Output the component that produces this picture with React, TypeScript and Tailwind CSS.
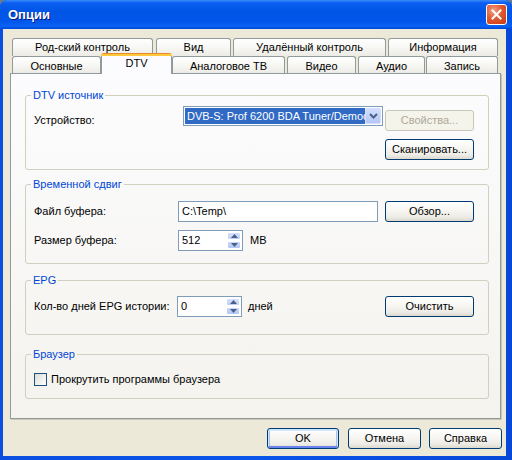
import React from "react";

type BtnProps = {
  className?: string;
  children: React.ReactNode;
  disabled?: boolean;
  def?: boolean;
};

function Btn({ className = "", children, disabled, def }: BtnProps) {
  const base =
    "h-[21px] shrink-0 flex items-center justify-center rounded-[3px] border leading-[13px]";
  const look = disabled
    ? "border-[#C9C7BA] text-[#ACA899] bg-[#F5F4EA]"
    : "border-[#003C74] text-black bg-[linear-gradient(to_bottom,#ffffff_0%,#f7f6f2_45%,#ecebe5_80%,#dcd8cc_100%)]";
  const ring = def
    ? "shadow-[inset_0_1px_0_1px_#cee7ff,inset_0_-1px_0_1px_#6982ee,inset_0_0_0_2px_#a8c1f4]"
    : "";
  return <div className={`${base} ${look} ${ring} ${className}`}>{children}</div>;
}

function Tab({ className = "", children }: { className?: string; children: React.ReactNode }) {
  return (
    <div
      className={`shrink-0 flex items-center justify-center border-t border-l border-r border-[#919B9C] rounded-t-[3px] bg-[linear-gradient(to_bottom,#ffffff_0%,#f7f7f4_50%,#ecebe5_100%)] leading-[13px] ${className}`}
    >
      {children}
    </div>
  );
}

function SpinArrows() {
  return (
    <div className="w-[15px] h-full flex flex-col gap-[1px] py-[1px] pr-[1px]">
      <div className="flex-1 flex items-center justify-center rounded-[2px] border border-white bg-[linear-gradient(to_bottom,#d6e2fd,#bcd0f8)]">
        <svg width="7" height="4" viewBox="0 0 7 4">
          <path d="M0 4 L3.5 0 L7 4 Z" fill="#4D6185" />
        </svg>
      </div>
      <div className="flex-1 flex items-center justify-center rounded-[2px] border border-white bg-[linear-gradient(to_bottom,#c9d8fb,#b2c6f4)]">
        <svg width="7" height="4" viewBox="0 0 7 4">
          <path d="M0 0 L3.5 4 L7 0 Z" fill="#4D6185" />
        </svg>
      </div>
    </div>
  );
}

function Spin({ value }: { value: string }) {
  return (
    <div className="w-[65px] h-[21px] shrink-0 flex items-stretch border border-[#7F9DB9] bg-white">
      <div className="flex-1 flex items-center pl-[3px] leading-[13px]">{value}</div>
      <SpinArrows />
    </div>
  );
}

function Legend({ children }: { children: React.ReactNode }) {
  return (
    <legend className="ml-[-3px] px-[2px] leading-[14px] text-[#0046D5]">{children}</legend>
  );
}

export default function App() {
  return (
    <div className="w-[512px] h-[460px] bg-[#6d7a8c] font-['Liberation_Sans',Arial,sans-serif] text-[11px] text-black overflow-hidden">
      <div className="w-full h-full flex flex-col rounded-t-[7px] overflow-hidden bg-[linear-gradient(to_right,#0a4fe0,#0a55ea_50%,#0847d8)]">
        {/* Title bar */}
        <div className="h-[29px] shrink-0 flex items-center pl-[8px] pr-[5px] bg-[linear-gradient(to_bottom,#3a8cf7_0%,#0b5ef2_10%,#0055e5_40%,#0257ea_75%,#0a62f3_90%,#0047d8_100%)]">
          <div className="flex-1 text-white font-bold text-[13px] leading-[16px] [text-shadow:1px_1px_0_#0a1883]">
            Опции
          </div>
          <div className="w-[21px] h-[21px] rounded-[3px] border border-white bg-[radial-gradient(circle_at_35%_30%,#f0a088_0%,#e25a32_45%,#c6380e_100%)] flex items-center justify-center">
            <svg width="11" height="11" viewBox="0 0 11 11">
              <path d="M1.5 1.5 L9.5 9.5 M9.5 1.5 L1.5 9.5" stroke="#ffffff" strokeWidth="2" strokeLinecap="square" />
            </svg>
          </div>
        </div>

        {/* Client area */}
        <div className="flex-1 ml-[3px] mr-[6px] mb-[4px] bg-[#ECE9D8] pt-[9px] pl-[7px] flex flex-col">
          {/* Tabs */}
          <div className="flex h-[18px] ml-[2px]">
            <Tab className="w-[141px] h-[18px]">Род-ский контроль</Tab>
            <Tab className="w-[75px] h-[18px] ml-[3px]">Вид</Tab>
            <Tab className="w-[153px] h-[18px] ml-[2px]">Удалённый контроль</Tab>
            <Tab className="w-[110px] h-[18px] ml-[2px]">Информация</Tab>
          </div>
          <div className="flex h-[17px] items-end ml-[2px] relative z-10">
            <Tab className="w-[89px] h-[17px] pt-[2px]">Основные</Tab>
            <div className="w-[71px] h-[21px] mb-[-1px] shrink-0 flex flex-col">
              <div className="h-[3px] rounded-t-[3px] bg-[linear-gradient(to_bottom,#e68b2c_0px,#e68b2c_1px,#ffc83c_1px,#ffc83c_3px)]" />
              <div className="flex-1 border-l border-r border-[#919B9C] bg-[#FCFCFE] flex justify-center pt-[1px] leading-[13px]">
                DTV
              </div>
            </div>
            <Tab className="w-[113px] h-[17px] pt-[2px]">Аналоговое ТВ</Tab>
            <Tab className="w-[69px] h-[17px] ml-[2px] pt-[2px]">Видео</Tab>
            <Tab className="w-[67px] h-[17px] ml-[2px] pt-[2px]">Аудио</Tab>
            <Tab className="w-[72px] h-[17px] ml-[1px] pt-[2px]">Запись</Tab>
          </div>

          {/* Panel */}
          <div className="w-[491px] h-[346px] shrink-0 border border-[#919B9C] shadow-[1px_1px_0_#c9c6b5] bg-[linear-gradient(to_bottom,#fcfcfe,#f4f3ee)] pt-[14px] pl-[14px] flex flex-col">
            {/* DTV источник */}
            <fieldset className="w-[464px] min-w-0 border border-[#D0D0BF] rounded-[3px] pl-[8px] pr-[14px] pt-[4px] pb-[9px]">
              <Legend>DTV источник</Legend>
              <div className="flex items-start">
                <div className="w-[149px] shrink-0 mt-[8px] leading-[13px]">Устройство:</div>
                <div className="w-[200px] h-[20px] shrink-0 border border-[#7F9DB9] bg-white flex items-stretch p-[1px]">
                  <div className="flex-1 min-w-0 overflow-hidden whitespace-nowrap bg-[#316AC5] text-white flex items-center pl-[2px] leading-[13px]">
                    DVB-S: Prof 6200 BDA Tuner/Demod
                  </div>
                  <div className="w-[16px] shrink-0 rounded-[2px] border border-[#d3defa] bg-[linear-gradient(to_bottom,#d2defc,#b4c8f6)] flex items-center justify-center">
                    <svg width="9" height="6" viewBox="0 0 9 6">
                      <path d="M1 1 L4.5 4.5 L8 1" fill="none" stroke="#4D6185" strokeWidth="2" />
                    </svg>
                  </div>
                </div>
                <div className="flex-1" />
                <div className="flex flex-col gap-[8px] mt-[4px]">
                  <Btn disabled className="w-[89px]">Свойства...</Btn>
                  <Btn className="w-[89px]">Сканировать...</Btn>
                </div>
              </div>
            </fieldset>

            {/* Временной сдвиг */}
            <fieldset className="w-[464px] min-w-0 mt-[7px] border border-[#D0D0BF] rounded-[3px] pl-[8px] pr-[14px] pt-[10px] pb-[12px]">
              <Legend>Временной сдвиг</Legend>
              <div className="flex items-center h-[21px]">
                <div className="w-[144px] shrink-0 leading-[13px]">Файл буфера:</div>
                <div className="w-[200px] h-[21px] shrink-0 border border-[#7F9DB9] bg-white flex items-center pl-[3px] leading-[13px]">
                  C:\Temp\
                </div>
                <div className="flex-1" />
                <Btn className="w-[89px]">Обзор...</Btn>
              </div>
              <div className="flex items-center h-[21px] mt-[8px]">
                <div className="w-[144px] shrink-0 leading-[13px]">Размер буфера:</div>
                <Spin value="512" />
                <div className="ml-[7px] leading-[13px]">MB</div>
              </div>
            </fieldset>

            {/* EPG */}
            <fieldset className="w-[464px] min-w-0 mt-[9px] border border-[#D0D0BF] rounded-[3px] pl-[8px] pr-[14px] pt-[9px] pb-[17px]">
              <Legend>EPG</Legend>
              <div className="flex items-center h-[21px]">
                <div className="w-[143px] shrink-0 leading-[13px]">Кол-во дней EPG истории:</div>
                <Spin value="0" />
                <div className="ml-[6px] leading-[13px]">дней</div>
                <div className="flex-1" />
                <Btn className="w-[89px]">Очистить</Btn>
              </div>
            </fieldset>

            {/* Браузер */}
            <fieldset className="w-[464px] min-w-0 mt-[12px] border border-[#D0D0BF] rounded-[3px] pl-[8px] pr-[14px] pt-[12px] pb-[12px]">
              <Legend>Браузер</Legend>
              <div className="flex items-center h-[13px]">
                <div className="w-[13px] h-[13px] shrink-0 border border-[#1C5180] bg-[linear-gradient(135deg,#dcdcd7,#ffffff)]" />
                <div className="ml-[4px] leading-[13px]">Прокрутить программы браузера</div>
              </div>
            </fieldset>
          </div>

          {/* Bottom buttons */}
          <div className="flex justify-end pr-[4px] mt-[9px]">
            <Btn def className="w-[72px]">OK</Btn>
            <Btn className="w-[73px] ml-[9px]">Отмена</Btn>
            <Btn className="w-[73px] ml-[8px]">Справка</Btn>
          </div>
        </div>
      </div>
    </div>
  );
}
